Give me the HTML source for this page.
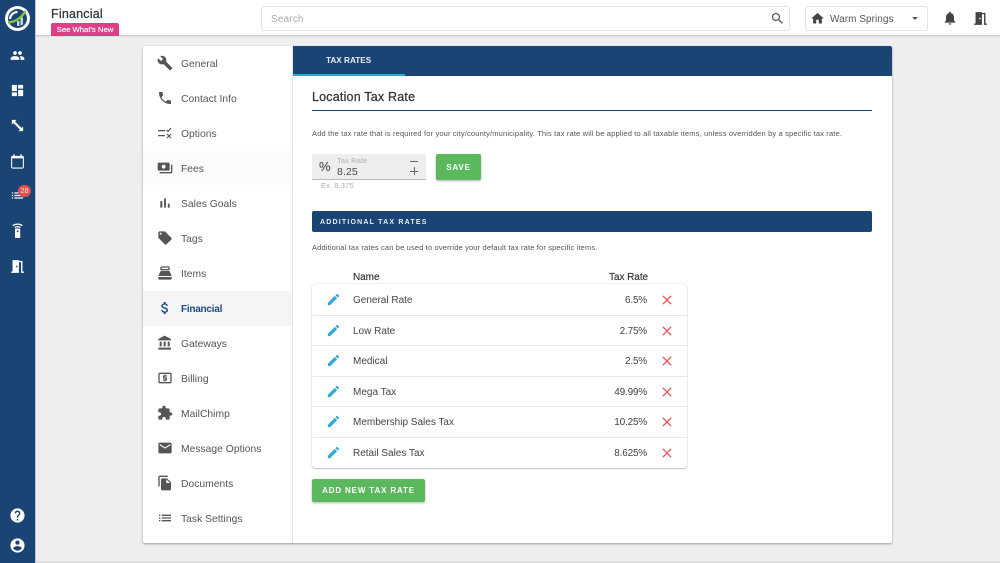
<!DOCTYPE html>
<html><head><meta charset="utf-8">
<style>
*{box-sizing:border-box}
html,body{margin:0;padding:0;width:1000px;height:563px;overflow:hidden;background:#eee;font-family:"Liberation Sans",sans-serif;color:#444}
.a{position:absolute}
.t{position:absolute;white-space:nowrap;line-height:14px}
svg{position:absolute;display:block}
.m{font-size:10.3px;letter-spacing:.02px;color:#555;left:181px;margin-top:2px}
.s{fill:#fff}.g{fill:#555}
.row{position:absolute;left:313px;width:374px;height:1px;background:#e6e6e6}
.n{left:353px;font-size:10px;color:#444;margin-top:2px}
.r{right:353px;font-size:10px;letter-spacing:-.2px;color:#444;margin-top:2px}
</style></head><body>
<div class="a" style="left:0;top:0;width:35px;height:563px;background:#1a4474"></div>
<div class="a" style="left:35px;top:0;width:1px;height:563px;background:#bcc6d2"></div>
<div class="a" style="left:36px;top:0;width:964px;height:36px;background:#fff;border-bottom:1px solid #d0d0d0"></div>
<div class="a" style="left:36px;top:36px;width:964px;height:1px;background:#e0e0e0"></div>
<div class="a" style="left:36px;top:561px;width:964px;height:2px;background:#ddd"></div>

<!-- logo -->
<svg style="left:4px;top:5px" width="27" height="27" viewBox="0 0 27 27"><circle cx="13.5" cy="13.5" r="12.5" fill="#fff"/><circle cx="13.5" cy="13.5" r="9.5" fill="#1a4474"/><path d="M13 21v-5h2.500v5zM16.500 20.500v-8h2.500v7z" fill="#c9d6e4"/><path d="M13.500 7a7.500 7.500 0 0 0-7.500 7" stroke="#fff" stroke-width="2.200" fill="none"/><path d="M4 17.500C11 17 17 13.500 21.500 6" stroke="#86c440" stroke-width="2.400" fill="none"/></svg>

<!-- side rail -->
<svg class="s" style="left:10px;top:48px" width="15" height="15" viewBox="0 0 24 24"><path d="M16 11c1.660 0 2.990-1.340 2.990-3S17.660 5 16 5c-1.660 0-3 1.340-3 3s1.340 3 3 3zm-8 0c1.660 0 2.990-1.340 2.990-3S9.660 5 8 5C6.340 5 5 6.340 5 8s1.340 3 3 3zm0 2c-2.330 0-7 1.170-7 3.500V19h14v-2.500c0-2.330-4.670-3.500-7-3.500zm8 0c-.29 0-.62.02-.97.05 1.160.84 1.970 1.970 1.970 3.450V19h6v-2.500c0-2.330-4.670-3.500-7-3.500z"/></svg>
<svg class="s" style="left:10px;top:83px" width="15" height="15" viewBox="0 0 24 24"><path d="M3 13h8V3H3v10zm0 8h8v-6H3v6zm10 0h8V11h-8v10zm0-18v6h8V3h-8z"/></svg>
<svg class="s" style="left:10px;top:118px" width="15" height="15" viewBox="0 0 24 24"><path d="M3 3h7.500L8 5.500l10.500 10.500L21 13.500V21h-7.500L16 18.500 5.500 8 3 10.500z"/></svg>
<svg class="s" style="left:9px;top:153px" width="17" height="17" viewBox="0 0 24 24"><path d="M19 4h-1V2h-2v2H8V2H6v2H5c-1.100 0-2 .9-2 2v14c0 1.100.9 2 2 2h14c1.100 0 2-.9 2-2V6c0-1.100-.9-2-2-2zm.5 16.500h-15V7.500h15z"/></svg>
<svg class="s" style="left:10px;top:188px" width="15" height="15" viewBox="0 0 24 24"><path d="M3 13h2v-2H3v2zm0 4h2v-2H3v2zm0-8h2V7H3v2zm4 4h14v-2H7v2zm0 4h14v-2H7v2zM7 7v2h14V7H7z"/></svg>
<div class="a" style="left:18px;top:185px;width:13px;height:12px;border-radius:6px;background:#e05050;color:#fbdcdc;font-size:7.500px;line-height:12px;text-align:center">28</div>
<svg style="left:10px;top:223px" width="15" height="16" viewBox="0 0 15 16"><rect x="5" y="5.500" width="5.200" height="9.500" rx=".8" fill="#fff"/><rect x="6.800" y="7.500" width="1.600" height="1.600" fill="#1a4474"/><path d="M2.800 2.600c2.800-2 6.800-2 9.600 0M4.700 4.500c1.700-1 4.100-1 5.800 0" stroke="#fff" fill="none" stroke-width="1.200"/></svg>
<svg class="s" style="left:9px;top:258px" width="17" height="17" viewBox="0 0 24 24"><path d="M14 6v15H3v-2h2V3h9v1h5v15h2v2h-4V6h-3zm-4 5v2h2v-2h-2z"/></svg>
<svg class="s" style="left:9px;top:507px" width="17" height="17" viewBox="0 0 24 24"><path d="M12 2C6.480 2 2 6.480 2 12s4.480 10 10 10 10-4.480 10-10S17.520 2 12 2zm1 17h-2v-2h2v2zm2.070-7.750l-.9.92C13.450 12.900 13 13.500 13 15h-2v-.5c0-1.100.45-2.100 1.170-2.830l1.240-1.260c.37-.36.59-.86.59-1.410 0-1.100-.9-2-2-2s-2 .9-2 2H8c0-2.210 1.790-4 4-4s4 1.790 4 4c0 .88-.36 1.680-.93 2.250z"/></svg>
<svg class="s" style="left:9px;top:537px" width="17" height="17" viewBox="0 0 24 24"><path d="M12 2C6.480 2 2 6.480 2 12s4.480 10 10 10 10-4.480 10-10S17.520 2 12 2zm0 3c1.660 0 3 1.340 3 3s-1.340 3-3 3-3-1.340-3-3 1.340-3 3-3zm0 14.200c-2.500 0-4.710-1.280-6-3.220.03-1.990 4-3.080 6-3.080 1.990 0 5.970 1.090 6 3.080-1.290 1.940-3.500 3.220-6 3.220z"/></svg>

<!-- header -->
<div class="t" style="left:51px;top:7px;font-size:12.500px;font-weight:400;letter-spacing:.2px;color:#333;-webkit-text-stroke:.25px #333">Financial</div>
<div class="a" style="left:51px;top:23px;width:68px;height:13px;background:#dc3f84;border-radius:2px 2px 0 0;color:#fff;font-size:7.700px;line-height:13px;text-align:center;-webkit-text-stroke:.15px #fff">See What's New</div>
<div class="a" style="left:261px;top:6px;width:529px;height:25px;border:1px solid #e4e4e4;border-radius:3px;background:#fff"></div>
<div class="t" style="left:271px;top:12px;font-size:10px;letter-spacing:.15px;color:#aaa;margin-top:1px">Search</div>
<svg style="left:770px;top:11px" fill="#555" width="15" height="15" viewBox="0 0 24 24"><path d="M15.500 14h-.79l-.28-.27C15.410 12.590 16 11.110 16 9.500 16 5.910 13.090 3 9.500 3S3 5.910 3 9.500 5.910 16 9.500 16c1.610 0 3.090-.59 4.230-1.570l.27.28v.79l5 4.990L20.490 19l-4.990-5zm-6 0C7.010 14 5 11.990 5 9.500S7.010 5 9.500 5 14 7.010 14 9.500 11.990 14 9.500 14z"/></svg>
<div class="a" style="left:805px;top:6px;width:123px;height:25px;border:1px solid #e4e4e4;border-radius:3px;background:#fff"></div>
<svg class="g" style="left:810px;top:11px;fill:#444" width="15" height="15" viewBox="0 0 24 24"><path d="M10 20v-6h4v6h5v-8h3L12 3 2 12h3v8z"/></svg>
<div class="t" style="left:830px;top:12px;font-size:10px;letter-spacing:.05px;color:#555;margin-top:1px">Warm Springs</div>
<div class="a" style="left:912px;top:17px;width:0;height:0;border-left:3.500px solid transparent;border-right:3.500px solid transparent;border-top:3.500px solid #555"></div>
<svg style="left:942px;top:10px;fill:#444" width="16" height="16" viewBox="0 0 24 24"><path d="M12 22c1.100 0 2-.9 2-2h-4c0 1.100.89 2 2 2zm6-6v-5c0-3.070-1.640-5.640-4.500-6.320V4c0-.83-.67-1.500-1.500-1.500s-1.500.67-1.500 1.500v.68C7.630 5.360 6 7.920 6 11v5l-2 2v1h16v-1l-2-2z"/></svg>
<svg style="left:972px;top:10px;fill:#444" width="17" height="17" viewBox="0 0 24 24"><path d="M14 6v15H3v-2h2V3h9v1h5v15h2v2h-4V6h-3zm-4 5v2h2v-2h-2z"/></svg>

<!-- card -->
<div class="a" style="left:143px;top:46px;width:749px;height:497px;background:#fff;border-radius:2px;box-shadow:0 1px 2px rgba(0,0,0,.35)"></div>
<div class="a" style="left:292px;top:46px;width:1px;height:497px;background:#e6e6e6"></div>
<div class="a" style="left:143px;top:151px;width:149px;height:34px;background:#fbfbfb"></div>
<div class="a" style="left:143px;top:291px;width:149px;height:35px;background:#f5f5f5"></div>

<!-- menu icons -->
<svg class="g" style="left:157px;top:55px" width="16" height="16" viewBox="0 0 24 24"><path d="M22.700 19l-9.100-9.100c.9-2.300.4-5-1.500-6.900-2-2-5-2.400-7.400-1.300L9 6 6 9 1.600 4.700C.4 7.100.9 10.100 2.900 12.100c1.900 1.900 4.600 2.400 6.900 1.500l9.100 9.100c.4.400 1 .4 1.400 0l2.300-2.300c.5-.4.5-1.100.1-1.400z"/></svg>
<svg class="g" style="left:157px;top:90px" width="16" height="16" viewBox="0 0 24 24"><path d="M6.620 10.790c1.440 2.830 3.760 5.140 6.590 6.590l2.200-2.200c.27-.27.67-.36 1.020-.24 1.120.37 2.330.57 3.570.57.55 0 1 .45 1 1V20c0 .55-.45 1-1 1-9.390 0-17-7.610-17-17 0-.55.45-1 1-1h3.500c.55 0 1 .45 1 1 0 1.250.2 2.450.57 3.570.11.35.03.74-.25 1.020l-2.200 2.200z"/></svg>
<svg style="left:157px;top:125px" width="16" height="16" viewBox="0 0 16 16"><path d="M1 5h7v1.200H1zM1 10h7v1.200H1z" fill="#555"/><path d="M9.500 5l1.500 1.500L14 3M10 9l4 4M14 9l-4 4" stroke="#555" stroke-width="1.200" fill="none"/></svg>
<svg class="g" style="left:157px;top:160px" width="16" height="16" viewBox="0 0 24 24"><path d="M19 14V6c0-1.100-.9-2-2-2H3c-1.100 0-2 .9-2 2v8c0 1.100.9 2 2 2h14c1.100 0 2-.9 2-2zm-9-1c-1.660 0-3-1.340-3-3s1.340-3 3-3 3 1.340 3 3-1.340 3-3 3zm13-6v11c0 1.100-.9 2-2 2H4v-2h17V7h2z"/></svg>
<svg class="g" style="left:157px;top:195px" width="16" height="16" viewBox="0 0 24 24"><path d="M5 9.200h3V19H5zM10.600 5h2.800v14h-2.800zm5.600 8H19v6h-2.800z"/></svg>
<svg class="g" style="left:157px;top:230px" width="16" height="16" viewBox="0 0 24 24"><path d="M21.410 11.580l-9-9C12.050 2.220 11.550 2 11 2H4c-1.100 0-2 .9-2 2v7c0 .55.22 1.050.59 1.420l9 9c.36.36.86.58 1.410.58.55 0 1.050-.22 1.410-.59l7-7c.37-.36.59-.86.59-1.410 0-.55-.23-1.060-.59-1.420zM5.500 7C4.670 7 4 6.330 4 5.500S4.670 4 5.500 4 7 4.670 7 5.500 6.330 7 5.500 7z"/></svg>
<svg class="g" style="left:157px;top:265px" width="16" height="16" viewBox="0 0 24 24"><path d="M17 2H7c-1.100 0-2 .9-2 2v3c0 .6.4 1 1 1h12c.6 0 1-.4 1-1V4c0-1.100-.9-2-2-2zm0 4H7V4h10v2zM6.500 9h11c.8 0 1.500.5 1.800 1.200L22 16.500H2l2.700-6.300C5 9.500 5.700 9 6.500 9zM2 18h20v2c0 1.100-.9 2-2 2H4c-1.100 0-2-.9-2-2z"/></svg>
<svg style="left:157px;top:300px;fill:#1f4c85" width="16" height="16" viewBox="0 0 24 24"><path d="M11.800 10.900c-2.270-.59-3-1.200-3-2.150 0-1.090 1.010-1.850 2.700-1.850 1.780 0 2.440.85 2.500 2.100h2.210c-.07-1.720-1.120-3.300-3.210-3.810V3h-3v2.160c-1.940.42-3.500 1.680-3.500 3.610 0 2.310 1.910 3.460 4.700 4.130 2.500.6 3 1.480 3 2.410 0 .69-.49 1.790-2.700 1.790-2.060 0-2.870-.92-2.980-2.100h-2.200c.12 2.190 1.760 3.420 3.680 3.830V21h3v-2.150c1.950-.37 3.500-1.500 3.500-3.550 0-2.840-2.430-3.810-4.700-4.400z"/></svg>
<svg class="g" style="left:157px;top:335px" width="16" height="16" viewBox="0 0 24 24"><path d="M4 10v7h3v-7H4zm6 0v7h3v-7h-3zM2 22h19v-3H2v3zm14-12v7h3v-7h-3zm-4.500-9L2 6v2h19V6l-9.500-5z"/></svg>
<svg class="g" style="left:157px;top:370px" width="16" height="16" viewBox="0 0 24 24"><path d="M11 17h2v-1h1c.55 0 1-.45 1-1v-3c0-.55-.45-1-1-1h-3v-1h4V8h-2V7h-2v1h-1c-.55 0-1 .45-1 1v3c0 .55.45 1 1 1h3v1H9v2h2v1zm9-13H4c-1.110 0-1.990.89-1.990 2L2 18c0 1.110.89 2 2 2h16c1.110 0 2-.89 2-2V6c0-1.110-.89-2-2-2zm0 14H4V6h16v12z"/></svg>
<svg class="g" style="left:157px;top:405px" width="16" height="16" viewBox="0 0 24 24"><path d="M20.500 11H19V7c0-1.100-.9-2-2-2h-4V3.500C13 2.120 11.880 1 10.500 1S8 2.120 8 3.500V5H4c-1.100 0-1.990.9-1.990 2v3.800H3.500c1.490 0 2.700 1.210 2.700 2.700s-1.210 2.700-2.700 2.700H2V20c0 1.100.9 2 2 2h3.800v-1.500c0-1.490 1.210-2.700 2.700-2.700 1.490 0 2.700 1.210 2.700 2.700V22H17c1.100 0 2-.9 2-2v-4h1.500c1.380 0 2.500-1.120 2.500-2.500S21.880 11 20.500 11z"/></svg>
<svg class="g" style="left:157px;top:440px" width="16" height="16" viewBox="0 0 24 24"><path d="M20 4H4c-1.100 0-1.990.9-1.990 2L2 18c0 1.100.9 2 2 2h16c1.100 0 2-.9 2-2V6c0-1.100-.9-2-2-2zm0 4l-8 5-8-5V6l8 5 8-5v2z"/></svg>
<svg class="g" style="left:157px;top:475px" width="16" height="16" viewBox="0 0 24 24"><path d="M16 1H4c-1.100 0-2 .9-2 2v14h2V3h12V1zm-1 4l6 6v10c0 1.100-.9 2-2 2H7.990C6.890 23 6 22.100 6 21l.01-14c0-1.100.89-2 1.990-2h7zm-1 7h5.500L14 6.500V12z"/></svg>
<svg class="g" style="left:157px;top:510px" width="16" height="16" viewBox="0 0 24 24"><path d="M3 13h2v-2H3v2zm0 4h2v-2H3v2zm0-8h2V7H3v2zm4 4h14v-2H7v2zm0 4h14v-2H7v2zM7 7v2h14V7H7z"/></svg>

<!-- menu labels -->
<div class="t m" style="top:56px">General</div>
<div class="t m" style="top:91px">Contact Info</div>
<div class="t m" style="top:126px">Options</div>
<div class="t m" style="top:161px">Fees</div>
<div class="t m" style="top:196px">Sales Goals</div>
<div class="t m" style="top:231px">Tags</div>
<div class="t m" style="top:266px">Items</div>
<div class="t m" style="top:301px;color:#1f4c85;font-weight:700;font-size:10px;letter-spacing:-.25px">Financial</div>
<div class="t m" style="top:336px">Gateways</div>
<div class="t m" style="top:371px">Billing</div>
<div class="t m" style="top:406px">MailChimp</div>
<div class="t m" style="top:441px">Message Options</div>
<div class="t m" style="top:476px">Documents</div>
<div class="t m" style="top:511px">Task Settings</div>

<!-- tab bar -->
<div class="a" style="left:293px;top:46px;width:599px;height:30px;background:#1a4474;border-radius:0 2px 0 0"></div>
<div class="a" style="left:293px;top:74px;width:112px;height:2px;background:#2fa8d5"></div>
<div class="t" style="left:326px;top:54px;font-size:8.200px;font-weight:700;color:#e8edf3">TAX RATES</div>

<!-- content -->
<div class="t" style="left:312px;top:90px;font-size:12.500px;letter-spacing:.2px;color:#333;-webkit-text-stroke:.25px #333">Location Tax Rate</div>
<div class="a" style="left:312px;top:110px;width:560px;height:1px;background:#1a4474"></div>
<div class="t" style="left:312px;top:127px;font-size:7.500px;letter-spacing:.155px;color:#555">Add the tax rate that is required for your city/county/municipality. This tax rate will be applied to all taxable items, unless overridden by a specific tax rate.</div>

<div class="a" style="left:312px;top:154px;width:114px;height:26px;background:#eee;border-bottom:1px solid #bbb;border-radius:2px 2px 0 0"></div>
<div class="t" style="left:319px;top:160px;font-size:13px;color:#555;-webkit-text-stroke:.2px #555">%</div>
<div class="t" style="left:337px;top:154px;font-size:7.500px;letter-spacing:.1px;color:#b0b0b0">Tax Rate</div>
<div class="t" style="left:337px;top:165px;font-size:10.500px;letter-spacing:.1px;color:#444">8.25</div>
<div class="a" style="left:410px;top:161px;width:8px;height:1px;background:#666"></div>
<div class="a" style="left:410px;top:170.500px;width:8px;height:1px;background:#666"></div>
<div class="a" style="left:413.500px;top:167px;width:1px;height:8px;background:#666"></div>
<div class="t" style="left:321px;top:179px;font-size:7.500px;letter-spacing:.1px;color:#b0b0b0">Ex. 8.375</div>
<div class="a" style="left:436px;top:154px;width:45px;height:26px;background:#5cb85c;border-radius:2px;box-shadow:0 1px 2px rgba(0,0,0,.3);color:#fff;font-size:8px;font-weight:700;letter-spacing:.85px;line-height:27px;text-align:center">SAVE</div>

<div class="a" style="left:312px;top:211px;width:560px;height:21px;background:#1a4474;border-radius:2px"></div>
<div class="t" style="left:320px;top:216px;font-size:7px;font-weight:700;letter-spacing:1.200px;color:#e8edf3">ADDITIONAL TAX RATES</div>
<div class="t" style="left:312px;top:241px;font-size:7.500px;letter-spacing:.15px;color:#555">Additional tax rates can be used to override your default tax rate for specific items.</div>

<div class="t" style="left:353px;top:271px;font-size:10px;letter-spacing:-.05px;color:#333;-webkit-text-stroke:.15px #333">Name</div>
<div class="t" style="left:609px;top:271px;font-size:10px;letter-spacing:-.05px;color:#333;-webkit-text-stroke:.15px #333">Tax Rate</div>

<div class="a" style="left:312px;top:284px;width:375px;height:184px;background:#fff;border-radius:3px;box-shadow:0 0 1px rgba(0,0,0,.35),0 1px 1px rgba(0,0,0,.2)"></div>
<div class="row" style="top:315px"></div>
<div class="row" style="top:345px"></div>
<div class="row" style="top:376px"></div>
<div class="row" style="top:406px"></div>
<div class="row" style="top:437px"></div>

<svg style="left:326px;top:292px;fill:#33a9d9" width="15" height="15" viewBox="0 0 24 24"><path d="M3 17.250V21h3.750L17.810 9.940l-3.750-3.750L3 17.250zM20.710 7.040c.39-.39.39-1.020 0-1.410l-2.340-2.340c-.39-.39-1.020-.39-1.410 0l-1.830 1.830 3.750 3.750 1.830-1.830z"/></svg>
<svg style="left:326px;top:323px;fill:#33a9d9" width="15" height="15" viewBox="0 0 24 24"><path d="M3 17.250V21h3.750L17.810 9.940l-3.750-3.750L3 17.250zM20.710 7.040c.39-.39.39-1.020 0-1.410l-2.340-2.340c-.39-.39-1.020-.39-1.410 0l-1.830 1.830 3.750 3.750 1.830-1.830z"/></svg>
<svg style="left:326px;top:353px;fill:#33a9d9" width="15" height="15" viewBox="0 0 24 24"><path d="M3 17.250V21h3.750L17.810 9.940l-3.750-3.750L3 17.250zM20.710 7.040c.39-.39.39-1.020 0-1.410l-2.340-2.340c-.39-.39-1.020-.39-1.410 0l-1.830 1.830 3.750 3.750 1.830-1.830z"/></svg>
<svg style="left:326px;top:384px;fill:#33a9d9" width="15" height="15" viewBox="0 0 24 24"><path d="M3 17.250V21h3.750L17.810 9.940l-3.750-3.750L3 17.250zM20.710 7.040c.39-.39.39-1.020 0-1.410l-2.340-2.340c-.39-.39-1.020-.39-1.410 0l-1.830 1.830 3.750 3.750 1.830-1.830z"/></svg>
<svg style="left:326px;top:414px;fill:#33a9d9" width="15" height="15" viewBox="0 0 24 24"><path d="M3 17.250V21h3.750L17.810 9.940l-3.750-3.750L3 17.250zM20.710 7.040c.39-.39.39-1.020 0-1.410l-2.340-2.340c-.39-.39-1.020-.39-1.410 0l-1.830 1.830 3.750 3.750 1.830-1.830z"/></svg>
<svg style="left:326px;top:445px;fill:#33a9d9" width="15" height="15" viewBox="0 0 24 24"><path d="M3 17.250V21h3.750L17.810 9.940l-3.750-3.750L3 17.250zM20.710 7.040c.39-.39.39-1.020 0-1.410l-2.340-2.340c-.39-.39-1.020-.39-1.410 0l-1.830 1.830 3.750 3.750 1.830-1.830z"/></svg>

<div class="t n" style="top:292px">General Rate</div>
<div class="t n" style="top:323px">Low Rate</div>
<div class="t n" style="top:353px">Medical</div>
<div class="t n" style="top:384px">Mega Tax</div>
<div class="t n" style="top:414px">Membership Sales Tax</div>
<div class="t n" style="top:445px">Retail Sales Tax</div>
<div class="t r" style="top:292px">6.5%</div>
<div class="t r" style="top:323px">2.75%</div>
<div class="t r" style="top:353px">2.5%</div>
<div class="t r" style="top:384px">49.99%</div>
<div class="t r" style="top:414px">10.25%</div>
<div class="t r" style="top:445px">8.625%</div>

<svg style="left:659px;top:292px;fill:#e25a5a" width="16" height="16" viewBox="0 0 24 24"><path d="M19 6.410L17.590 5 12 10.590 6.410 5 5 6.410 10.590 12 5 17.590 6.410 19 12 13.410 17.590 19 19 17.590 13.410 12z"/></svg>
<svg style="left:659px;top:323px;fill:#e25a5a" width="16" height="16" viewBox="0 0 24 24"><path d="M19 6.410L17.590 5 12 10.590 6.410 5 5 6.410 10.590 12 5 17.590 6.410 19 12 13.410 17.590 19 19 17.590 13.410 12z"/></svg>
<svg style="left:659px;top:353px;fill:#e25a5a" width="16" height="16" viewBox="0 0 24 24"><path d="M19 6.410L17.590 5 12 10.590 6.410 5 5 6.410 10.590 12 5 17.590 6.410 19 12 13.410 17.590 19 19 17.590 13.410 12z"/></svg>
<svg style="left:659px;top:384px;fill:#e25a5a" width="16" height="16" viewBox="0 0 24 24"><path d="M19 6.410L17.590 5 12 10.590 6.410 5 5 6.410 10.590 12 5 17.590 6.410 19 12 13.410 17.590 19 19 17.590 13.410 12z"/></svg>
<svg style="left:659px;top:414px;fill:#e25a5a" width="16" height="16" viewBox="0 0 24 24"><path d="M19 6.410L17.590 5 12 10.590 6.410 5 5 6.410 10.590 12 5 17.590 6.410 19 12 13.410 17.590 19 19 17.590 13.410 12z"/></svg>
<svg style="left:659px;top:445px;fill:#e25a5a" width="16" height="16" viewBox="0 0 24 24"><path d="M19 6.410L17.590 5 12 10.590 6.410 5 5 6.410 10.590 12 5 17.590 6.410 19 12 13.410 17.590 19 19 17.590 13.410 12z"/></svg>

<div class="a" style="left:312px;top:479px;width:113px;height:23px;background:#5cb85c;border-radius:2px;box-shadow:0 1px 2px rgba(0,0,0,.3);color:#fff;font-size:8px;font-weight:700;letter-spacing:.85px;line-height:23px;text-align:center;white-space:nowrap">ADD NEW TAX RATE</div>
</body></html>
